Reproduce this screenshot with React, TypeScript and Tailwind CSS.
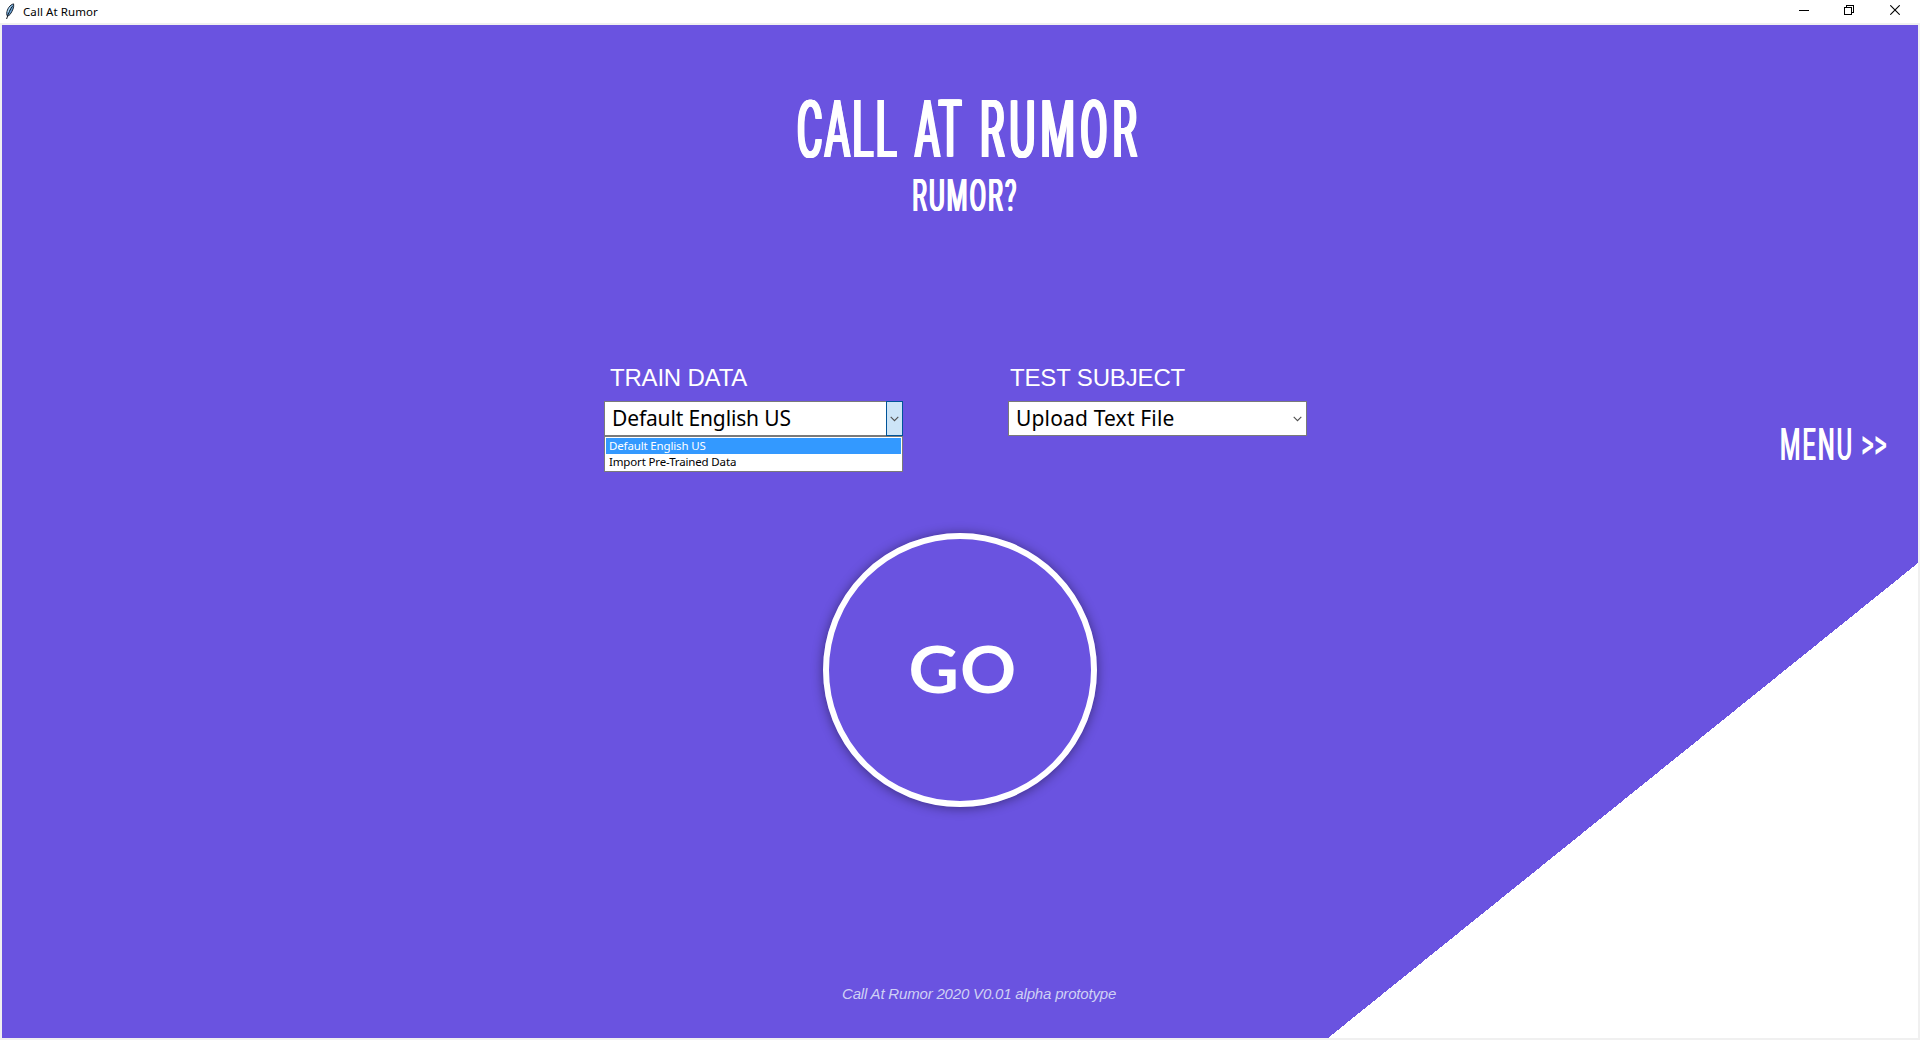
function Feather() {
  return (
    <svg width="11" height="17" viewBox="0 0 11 17" className="shrink-0">
      <path d="M1.7 10.5 C2 6 5 1.6 8.6 0.9 C9.2 4 7.6 8 5 11.5 C4 12.7 2.6 13.2 2 12.6 Z" fill="#6aa6dc" stroke="#1b2430" strokeWidth="1" />
      <path d="M7.5 3 C5.4 6 3.4 10 1.6 16" stroke="#101820" strokeWidth="1" fill="none" />
      <path d="M6.6 2.8 C4.4 4.8 3.4 7.4 3 9.4" stroke="#bcdcf2" strokeWidth="1" fill="none" />
    </svg>
  );
}

function TitleBar() {
  return (
    <header className="flex h-[23px] items-start justify-between bg-white text-black">
      <div className="flex pl-[5px] pt-[3px]">
        <Feather />
        <span className="ml-[7px] whitespace-nowrap font-['Noto_Sans','Open_Sans',sans-serif] text-[11.5px] leading-[17px] tracking-[0.08px]">
          Call At Rumor
        </span>
      </div>
      <div className="flex pr-5 pt-[5px]">
        <svg width="10" height="10" className="mr-[35px]" shapeRendering="crispEdges">
          <rect x="0" y="5" width="10" height="1" />
        </svg>
        <svg width="10" height="10" className="mr-9" fill="none" stroke="#000" shapeRendering="crispEdges">
          <path d="M0.5 2.5h7v7h-7zM2.5 2.5v-2h7v7h-2" />
        </svg>
        <svg width="10" height="10" fill="none" stroke="#000" strokeWidth="1.1">
          <path d="M0.3 0.3l9.4 9.4M9.7 0.3l-9.4 9.4" />
        </svg>
      </div>
    </header>
  );
}

function Chevron() {
  return (
    <svg width="9" height="6" viewBox="0 0 9 6" fill="none" stroke="#505050" strokeWidth="1.1">
      <path d="M0.7 0.9l3.8 3.8 3.8-3.8" />
    </svg>
  );
}

function Option({ label, selected }: { label: string; selected?: boolean }) {
  return (
    <li className={selected ? "h-4 bg-[#3399ff] pl-[3px] text-white" : "h-4 pl-[3px] text-black"}>
      <span className="block whitespace-nowrap text-[11.5px] leading-[15px] tracking-[-0.15px]">{label}</span>
    </li>
  );
}

export default function App() {
  return (
    <div className="flex h-[1040px] w-[1920px] flex-col overflow-hidden bg-[#f0f0f0]">
      <TitleBar />
      <main className="relative mx-[2px] mt-[2px] h-[1013px] overflow-hidden bg-[#6a53e0]">
        <svg width="590" height="475" className="absolute bottom-0 right-0" shapeRendering="crispEdges">
          <path d="M590 0V475H0Z" fill="#fff" />
        </svg>
        <div className="relative flex h-full flex-col text-white">
          <h1 className="mt-[59px] flex h-[92px] shrink-0 pl-[795px] font-['Roboto',sans-serif] text-[79px] font-normal leading-[92px] [text-shadow:1px_0_#fff,-1px_0_#fff,2px_0_#fff,-2px_0_#fff,3px_0_#fff,-3px_0_#fff]">
            <span className="w-[118px] origin-left scale-x-[0.49] whitespace-nowrap tracking-[5px]">CALL</span>
            <span className="w-[65px] origin-left scale-x-[0.48] whitespace-nowrap tracking-[3px]">AT</span>
            <span className="w-[160px] origin-left scale-x-[0.5] whitespace-nowrap tracking-[10.5px]">RUMOR</span>
          </h1>
          <h2 className="-mt-[6px] ml-[910px] h-[52px] w-[110px] origin-left scale-x-[0.53] whitespace-nowrap font-['Roboto',sans-serif] text-[45px] font-normal leading-[52px] tracking-[4px] [text-shadow:1px_0_#fff,-1px_0_#fff,2px_0_#fff]">
            RUMOR?
          </h2>

          <div className="mt-[142px] flex h-[109px] pl-[602px]">
            <section className="w-[404px]">
              <h3 className="pl-[6px] font-['Liberation_Sans',sans-serif] text-[24px] leading-[27px] tracking-[-0.2px]">TRAIN DATA</h3>
              <div className="mt-[10px] w-[299px] font-['Noto_Sans','Open_Sans',sans-serif]">
                <div className="flex h-[35px] border border-[#7a7a7a] bg-white">
                  <span className="flex-1 whitespace-nowrap pl-[7px] text-[21px] leading-[33px] tracking-[-0.14px] text-black">Default English US</span>
                  <span className="-my-px -mr-px flex w-[17px] items-center justify-center border border-[#005499] bg-[#cce4f7]">
                    <Chevron />
                  </span>
                </div>
                <ul className="h-[36px] border border-[#7a7a7a] bg-white p-px">
                  <Option label="Default English US" selected />
                  <Option label="Import Pre-Trained Data" />
                </ul>
              </div>
            </section>
            <section className="w-[300px]">
              <h3 className="pl-[2px] font-['Liberation_Sans',sans-serif] text-[24px] leading-[27px] tracking-[-0.15px]">TEST SUBJECT</h3>
              <div className="mt-[10px] flex h-[35px] w-[299px] items-center border border-[#7a7a7a] bg-white pr-[4px] font-['Noto_Sans','Open_Sans',sans-serif]">
                <span className="flex-1 whitespace-nowrap pl-[7px] text-[21px] leading-[33px] tracking-[0.16px] text-black">Upload Text File</span>
                <Chevron />
              </div>
            </section>
          </div>

          <div className="-mt-[56px] flex h-[56px] items-center pl-[1778px] font-['Roboto',sans-serif] text-[45px] leading-[56px]">
            <span className="w-[81px] origin-left scale-x-[0.52] whitespace-nowrap tracking-[4px] [text-shadow:1px_0_#fff,-1px_0_#fff]">MENU</span>
            <span className="w-[50px] origin-left scale-x-[0.62] whitespace-nowrap text-[40px] font-medium">&gt;&gt;</span>
          </div>

          <button className="ml-[821px] mt-[60px] flex size-[274px] shrink-0 items-center justify-center rounded-full border-[6px] border-white shadow-[0_1px_12px_rgba(0,0,0,0.45)]">
            <span className="-mt-[4px] ml-[5px] scale-x-[1.07] font-['Lato',sans-serif] text-[65px] font-bold leading-[80px] tracking-[1px]">GO</span>
          </button>

          <footer className="mt-[178px] pl-[840px] font-['Liberation_Sans',sans-serif] text-[15px] italic leading-[18px] tracking-[-0.18px] text-[#cfd0f5]">
            Call At Rumor 2020 V0.01 alpha prototype
          </footer>
        </div>
      </main>
    </div>
  );
}
